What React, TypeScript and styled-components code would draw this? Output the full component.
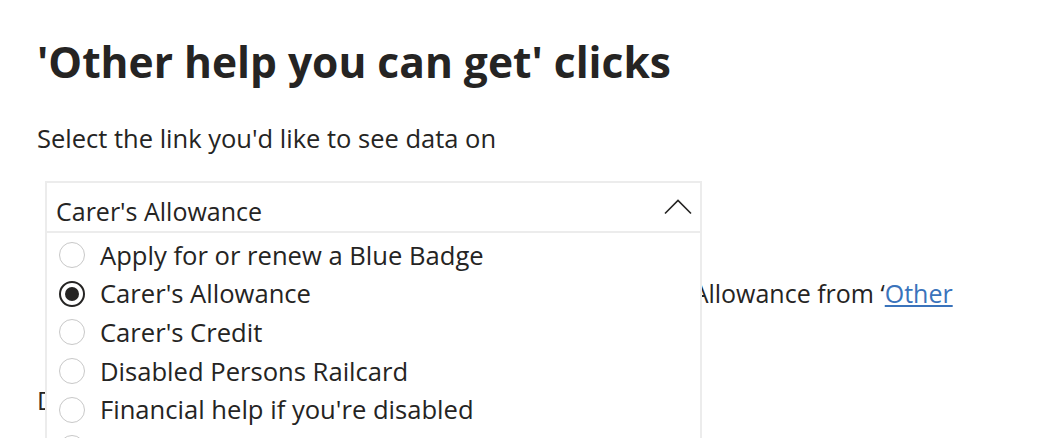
import { createGlobalStyle } from "styled-components";
import styled from "styled-components";

const GlobalStyle = createGlobalStyle`
  html, body {
    margin: 0;
    padding: 0;
    background: #ffffff;
  }

  body {
    font-family: "Open Sans", "Noto Sans", sans-serif;
    color: #252423;
  }
`;

const Page = styled.div`
  width: 1052px;
  height: 438px;
  overflow: hidden;
  padding: 0 37px;
  box-sizing: border-box;
`;

const Heading = styled.h1`
  margin: 0;
  padding-top: 34px;
  font-size: 42.5px;
  line-height: 56px;
  font-weight: 700;
  color: #252423;
`;

const Label = styled.p`
  margin: 32px 0 0 0;
  font-size: 25.5px;
  line-height: 32px;
`;

const SelectWrapper = styled.div`
  position: relative;
  margin: 27px 0 0 8px;
  width: 657px;
`;

const SelectBox = styled.div`
  display: flex;
  align-items: center;
  justify-content: space-between;
  height: 52px;
  padding: 0 8px 0 9px;
  box-sizing: border-box;
  border: 2px solid #ececec;
  font-size: 25px;
  background: #ffffff;
`;

const SelectValue = styled.span`
  padding-top: 8px;
`;

const OptionList = styled.ul`
  position: absolute;
  top: 100%;
  left: 0;
  right: 0;
  margin: 0;
  padding: 3px 0 0 0;
  list-style: none;
  background: #ffffff;
  border: 2px solid #ececec;
  border-top: none;
  height: 260px;
  box-sizing: border-box;
`;

const Option = styled.li`
  display: flex;
  align-items: center;
  gap: 15px;
  height: 38.6px;
  padding-left: 12px;
  font-size: 25.6px;
  white-space: nowrap;
`;

const Radio = styled.span<{ $checked: boolean }>`
  flex: none;
  width: 26px;
  height: 26px;
  border-radius: 50%;
  box-sizing: border-box;
  border: ${(props) => (props.$checked ? "2px solid #252423" : "1.5px solid #c8c8c8")};
  display: flex;
  align-items: center;
  justify-content: center;

  &::after {
    content: "";
    display: ${(props) => (props.$checked ? "block" : "none")};
    width: 14px;
    height: 14px;
    border-radius: 50%;
    background: #252423;
  }
`;

const Paragraph = styled.p`
  margin: 0;
  font-size: 25px;
  line-height: 39px;
`;

const FirstParagraph = styled(Paragraph)`
  margin-top: 41px;
  padding-left: 20px;
  max-width: 930px;
`;

const NextParagraph = styled(Paragraph)`
  margin-top: 29px;
`;

const Link = styled.a`
  color: #3a73bb;
  text-decoration: underline;
`;

const ChevronUp = () => (
  <svg width="28" height="16" viewBox="0 0 28 16">
    <polyline
      points="1,14.5 14,1.5 27,14.5"
      fill="none"
      stroke="#252423"
      strokeWidth="1.6"
    />
  </svg>
);

const options = [
  "Apply for or renew a Blue Badge",
  "Carer's Allowance",
  "Carer's Credit",
  "Disabled Persons Railcard",
  "Financial help if you're disabled",
  "Help with housing costs",
];

const App = () => {
  const selected = "Carer's Allowance";

  return (
    <>
      <GlobalStyle />
      <Page>
        <Heading>'Other help you can get' clicks</Heading>
        <Label>Select the link you'd like to see data on</Label>
        <SelectWrapper>
          <SelectBox>
            <SelectValue>{selected}</SelectValue>
            <ChevronUp />
          </SelectBox>
          <OptionList>
            {options.map((option) => (
              <Option key={option}>
                <Radio $checked={option === selected} />
                <span>{option}</span>
              </Option>
            ))}
          </OptionList>
        </SelectWrapper>
        <FirstParagraph>
          This shows how many users clicked through to Carer's
          Allowance from ‘<Link href="#">Other help you can get</Link>’.
        </FirstParagraph>
        <NextParagraph>
          Data is updated daily and shows the last 12 months.
        </NextParagraph>
      </Page>
    </>
  );
};

export default App;
